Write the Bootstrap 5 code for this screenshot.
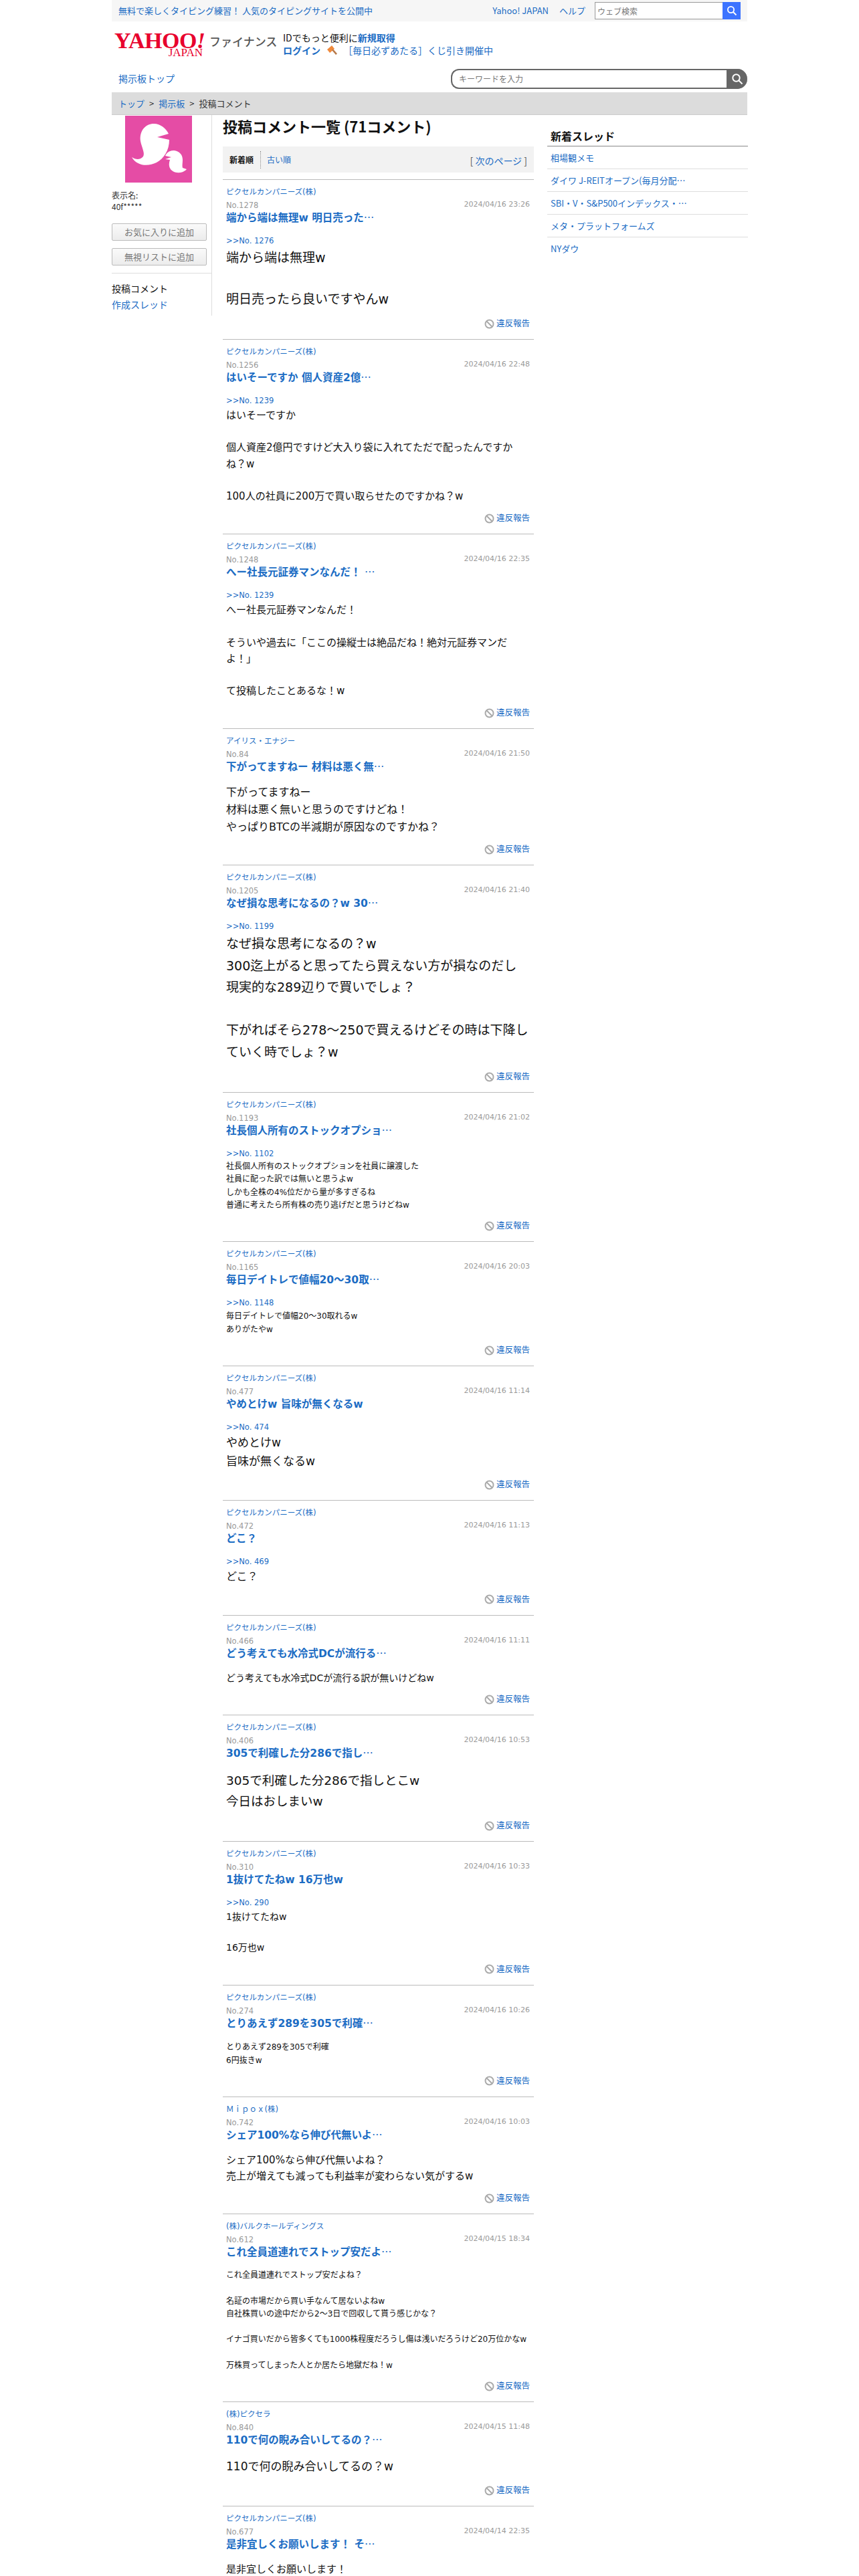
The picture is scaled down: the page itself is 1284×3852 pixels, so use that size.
<!DOCTYPE html>
<html lang="ja">
<head>
  <meta charset="UTF-8" />
  <meta name="viewport" content="width=device-width, initial-scale=1.0"/>
  <title>投稿コメント一覧 - Yahoo!ファイナンス</title>
  <link href="https://cdn.jsdelivr.net/npm/bootstrap@5.3.0/dist/css/bootstrap.min.css" rel="stylesheet"/>
  <style>
    html, body { height: 3852px; overflow: hidden; }
    body { font-family: "Noto Sans CJK JP", "Noto Sans", sans-serif; font-size: 13px; color: #111; background: #fff; }
    a { color: #1b6cc4; text-decoration: none; }
    .page-wrap { width: 950px; margin: 0 auto; }

    .top-strip { height: 32px; background: #f6f6f6; padding: 0 10px; }
    .strip-search { width: 218px; height: 26px; border: 1px solid #999; border-right: 0; background: #fff; margin-left: 14px; }
    .strip-search input { border: 0; outline: 0; width: 190px; height: 24px; padding: 0 3px; font-size: 12px; }
    .strip-search input::placeholder, .kw-search input::placeholder { color: #777; }
    .strip-search span { width: 27px; height: 26px; margin-top: -1px; background: #3c73ff; }

    .brand-row { height: 71px; padding: 16px 0 0 4px; }
    .yj-logo { width: 137px; font-family: "Liberation Serif", serif; color: #e8002d; }
    .yj-main { font-size: 34px; font-weight: 700; line-height: 25px; letter-spacing: -.5px; display: block; white-space: nowrap; }
    .yj-main i { font-style: italic; }
    .yj-sub { font-size: 17px; line-height: 12px; font-weight: 400; display: block; text-align: right; padding-right: 5px; }
    .fin-name { font-size: 17px; font-weight: 500; color: #555; margin: 3px 0 0 5px; line-height: 22px; width: 110px; }
    .id-lines { line-height: 19px; font-size: 14px; margin-top: -1px; }
    .kw-row { height: 35px; padding-left: 10px; }
    .kw-link { font-size: 14px; }
    .kw-search { width: 443px; height: 30px; border: 2px solid #666; border-right: 0; border-radius: 12px 15px 15px 12px; }
    .kw-search input { flex: 1; min-width: 0; border: 0; outline: 0; background: transparent; padding: 0 10px; font-size: 12px; }
    .kw-search span { width: 31px; height: 30px; margin-top: -2px; background: #666; border-radius: 0 15px 15px 0; }

    .crumb-bar { height: 34px; background: #dcdcdc; border-bottom: 1px solid #ccc; padding: 0 10px; }
    .crumb-bar .breadcrumb { --bs-breadcrumb-divider: ">"; --bs-breadcrumb-margin-bottom: 0; --bs-breadcrumb-item-padding-x: 7px; font-size: 13px; color: #333; }
    .crumb-bar .breadcrumb-item.active { color: #333; }
    .crumb-bar .breadcrumb-item + .breadcrumb-item::before { color: #333; }

    .left-rail { width: 150px; height: 300px; border-right: 1px solid #ddd; flex: none; }
    .face-box { width: 100px; height: 100px; margin: 1px 0 0 20px; display: block; }
    .rail-name { font-size: 12px; line-height: 17px; margin-top: 10px; color: #333; }
    .rail-btns { margin-top: 17px; gap: 11px; }
    .rail-btn { display: block; width: 142px; height: 26px; padding: 0; border: 1px solid #bbb; border-radius: 2px; background: linear-gradient(#fafafa, #ececec); color: #777; font-size: 13px; line-height: 24px; }
    .rail-menu { border-top: 1px solid #ddd; margin-top: 11px; padding-top: 10px; font-size: 14px; line-height: 24px; }

    .main-col { width: 465px; margin-left: 16px; flex: none; }
    .list-title { font-size: 22px; font-weight: 700; line-height: 30px; margin: 1px 0 16px; }
    .sort-bar { height: 39px; background: #f2f2f2; padding: 0 10px; margin-bottom: 10px; }
    .sort-now { font-size: 12px; font-weight: 700; padding-right: 10px; border-right: 1px dotted #888; line-height: 26px; }
    .sort-other { font-size: 12px; padding-left: 9px; }
    .next-page { font-size: 14px; color: #555; margin-top: 4px; }

    .post-item { border-top: 1px solid #bbb; padding: 11px 6px 14px 5px; font-family: "DejaVu Sans", "Noto Sans CJK JP", sans-serif; }
    .post-corp { display: block; font-size: 11.5px; line-height: 14px; }
    .post-meta { margin-top: 6px; line-height: 15px; color: #999; }
    .post-no { font-size: 11.5px; }
    .post-time { font-size: 11px; margin-top: -2px; }
    .post-head { display: block; height: 22px; font-size: 15.5px; font-weight: 700; line-height: 22px; }
    .post-dots { font-family: "Noto Sans CJK JP", sans-serif; font-weight: 400; line-height: 1; }
    .post-ref { display: block; font-size: 11.5px; line-height: 19px; margin-top: 14px; }
    .post-text { margin: 0; color: #111; }
    .post-text.no-ref { margin-top: 14px; }
    .txt-12 { font-size: 12px; line-height: 19.3px; }
    .txt-12b { font-size: 12px; line-height: 20px; }
    .txt-14 { font-size: 14px; line-height: 22.7px; }
    .txt-15 { font-size: 15px; line-height: 24.2px; }
    .txt-16 { font-size: 16px; line-height: 25.6px; }
    .txt-17 { font-size: 17px; line-height: 27.5px; }
    .txt-17b { font-size: 17px; line-height: 29px; }
    .txt-185 { font-size: 18.5px; line-height: 31px; }
    .txt-19 { font-size: 19px; line-height: 31px; }
    .txt-20 { font-size: 19px; line-height: 32.3px; margin-right: -6px; }
    .post-report { height: 18px; margin-top: 12px; font-size: 12.5px; line-height: 18px; gap: 3px; }

    .side-col { width: 300px; margin-left: 20px; flex: none; padding-top: 20px; }
    .side-title { font-size: 16px; font-weight: 700; line-height: 22px; padding: 0 0 4px 5px; border-bottom: 1px solid #888; margin: 0; }
    .side-col .list-group-item { height: 34px; padding: 0 5px; line-height: 33px; font-size: 13px; border-color: #ddd; color: #1b6cc4; }
  </style>
</head>
<body>
  <div class="page-wrap">
    <div class="top-strip d-flex align-items-center justify-content-between">
      <a href="#">無料で楽しくタイピング練習！ 人気のタイピングサイトを公開中</a>
      <div class="d-flex align-items-center">
        <a href="#" class="me-3">Yahoo! JAPAN</a>
        <a href="#">ヘルプ</a>
        <div class="strip-search d-flex">
          <input type="text" placeholder="ウェブ検索"/>
          <span class="d-flex align-items-center justify-content-center">
            <svg width="16" height="16" viewBox="0 0 16 16" fill="none" stroke="#fff" stroke-width="1.8"><circle cx="6.5" cy="6.5" r="4.6"/><path d="M10 10l4.5 4.5"/></svg>
          </span>
        </div>
      </div>
    </div>

    <div class="brand-row d-flex">
      <a href="#" class="yj-logo">
        <span class="yj-main">YAHOO<i>!</i></span>
        <span class="yj-sub">JAPAN</span>
      </a>
      <div class="fin-name">ファイナンス</div>
      <div class="id-lines">
        <div>IDでもっと便利に<a href="#" class="fw-bold">新規取得</a></div>
        <div class="d-flex align-items-center">
          <a href="#" class="fw-bold">ログイン</a>
          <svg class="mx-2" width="18" height="17" viewBox="0 0 18 17"><path d="M9 1L2 7l4 5 7-6z" fill="#f08a3c"/><path d="M9 8l6 7 2-1.8-6-6.8z" fill="#b97a4a"/></svg>
          <a href="#">［毎日必ずあたる］くじ引き開催中</a>
        </div>
      </div>
    </div>

    <div class="kw-row d-flex align-items-start justify-content-between">
      <a href="#" class="kw-link mt-1">掲示板トップ</a>
      <div class="kw-search d-flex">
        <input type="text" placeholder="キーワードを入力"/>
        <span class="d-flex align-items-center justify-content-center">
          <svg width="18" height="18" viewBox="0 0 18 18" fill="none" stroke="#fff" stroke-width="2"><circle cx="7.5" cy="7.5" r="5.2"/><path d="M11.5 11.5l5 5"/></svg>
        </span>
      </div>
    </div>

    <div class="crumb-bar d-flex align-items-center">
      <ol class="breadcrumb">
        <li class="breadcrumb-item"><a href="#">トップ</a></li>
        <li class="breadcrumb-item"><a href="#">掲示板</a></li>
        <li class="breadcrumb-item active">投稿コメント</li>
      </ol>
    </div>

    <div class="d-flex">
      <aside class="left-rail">
        <svg class="face-box" viewBox="0 0 100 100">
          <rect width="100" height="100" fill="#e54ca5"/>
          <path d="M10 62C16 66 23 66 27 61C30 56 25 48 23 38C21 22 31 12 43 12C53 12 61 19 65 27L48 32L66 36C66 52 58 64 47 70C35 76 18 76 10 62Z" fill="#fff"/>
          <path d="M60 60C62 55 66 52 73 52C81 53 86 58 86 66C86 71 85 75 86 78L92 80C87 86 76 87 70 82C65 78 65 72 67 66L60 65L69 62Z" fill="#fff"/>
        </svg>
        <div class="rail-name">表示名:<br>40f*****</div>
        <div class="rail-btns d-flex flex-column">
          <button type="button" class="rail-btn">お気に入りに追加</button>
          <button type="button" class="rail-btn">無視リストに追加</button>
        </div>
        <div class="rail-menu">
          <div>投稿コメント</div>
          <a href="#">作成スレッド</a>
        </div>
      </aside>

      <main class="main-col">
        <h1 class="list-title">投稿コメント一覧 (71コメント)</h1>
        <div class="sort-bar d-flex align-items-center justify-content-between">
          <div class="d-flex align-items-center">
            <span class="sort-now">新着順</span>
            <a href="#" class="sort-other">古い順</a>
          </div>
          <span class="next-page">[ <a href="#">次のページ</a> ]</span>
        </div>
        <div id="postList"></div>
      </main>

      <aside class="side-col">
        <h2 class="side-title">新着スレッド</h2>
        <div class="list-group list-group-flush">
          <a href="#" class="list-group-item">相場観メモ</a>
          <a href="#" class="list-group-item">ダイワ J-REITオープン(毎月分配…</a>
          <a href="#" class="list-group-item">SBI・V・S&amp;P500インデックス・…</a>
          <a href="#" class="list-group-item">メタ・プラットフォームズ</a>
          <a href="#" class="list-group-item">NYダウ</a>
        </div>
      </aside>
    </div>
  </div>

  <script>
    const PX = "ピクセルカンパニーズ(株)";
    const posts = [
      [PX, "1278", "2024/04/16 23:26", "端から端は無理w 明日売った…", "1276", "19", "端から端は無理w<br><br>明日売ったら良いですやんw"],
      [PX, "1256", "2024/04/16 22:48", "はいそーですか 個人資産2億…", "1239", "15", "はいそーですか<br><br>個人資産2億円ですけど大入り袋に入れてただで配ったんですかね？w<br><br>100人の社員に200万で買い取らせたのですかね？w"],
      [PX, "1248", "2024/04/16 22:35", "へー社長元証券マンなんだ！ …", "1239", "15", "へー社長元証券マンなんだ！<br><br>そういや過去に「ここの操縦士は絶品だね！絶対元証券マンだよ！」<br><br>て投稿したことあるな！w"],
      ["アイリス・エナジー", "84", "2024/04/16 21:50", "下がってますねー 材料は悪く無…", "", "16", "下がってますねー<br>材料は悪く無いと思うのですけどね！<br>やっぱりBTCの半減期が原因なのですかね？"],
      [PX, "1205", "2024/04/16 21:40", "なぜ損な思考になるの？w 30…", "1199", "20", "なぜ損な思考になるの？w<br>300迄上がると思ってたら買えない方が損なのだし<br>現実的な289辺りで買いでしょ？<br><br>下がればそら278〜250で買えるけどその時は下降していく時でしょ？w"],
      [PX, "1193", "2024/04/16 21:02", "社長個人所有のストックオプショ…", "1102", "12", "社長個人所有のストックオプションを社員に譲渡した<br>社員に配った訳では無いと思うよw<br>しかも全株の4%位だから量が多すぎるね<br>普通に考えたら所有株の売り逃げだと思うけどねw"],
      [PX, "1165", "2024/04/16 20:03", "毎日デイトレで値幅20〜30取…", "1148", "12b", "毎日デイトレで値幅20〜30取れるw<br>ありがたやw"],
      [PX, "477", "2024/04/16 11:14", "やめとけw 旨味が無くなるw", "474", "17", "やめとけw<br>旨味が無くなるw"],
      [PX, "472", "2024/04/16 11:13", "どこ？", "469", "16", "どこ？"],
      [PX, "466", "2024/04/16 11:11", "どう考えても水冷式DCが流行る…", "", "14", "どう考えても水冷式DCが流行る訳が無いけどねw"],
      [PX, "406", "2024/04/16 10:53", "305で利確した分286で指し…", "", "185", "305で利確した分286で指しとこw<br>今日はおしまいw"],
      [PX, "310", "2024/04/16 10:33", "1抜けてたねw 16万也w", "290", "14", "1抜けてたねw<br><br>16万也w"],
      [PX, "274", "2024/04/16 10:26", "とりあえず289を305で利確…", "", "12b", "とりあえず289を305で利確<br>6円抜きw"],
      ["Ｍｉｐｏｘ(株)", "742", "2024/04/16 10:03", "シェア100%なら伸び代無いよ…", "", "15", "シェア100%なら伸び代無いよね？<br>売上が増えても減っても利益率が変わらない気がするw"],
      ["(株)バルクホールディングス", "612", "2024/04/15 18:34", "これ全員道連れでストップ安だよ…", "", "12", "これ全員道連れでストップ安だよね？<br><br>名証の市場だから買い手なんて居ないよねw<br>自社株買いの途中だから2〜3日で回収して貰う感じかな？<br><br>イナゴ買いだから皆多くても1000株程度だろうし傷は浅いだろうけど20万位かなw<br><br>万株買ってしまった人とか居たら地獄だね！w"],
      ["(株)ピクセラ", "840", "2024/04/15 11:48", "110で何の睨み合いしてるの？…", "", "17b", "110で何の睨み合いしてるの？w"],
      [PX, "677", "2024/04/14 22:35", "是非宜しくお願いします！ そ…", "", "15", "是非宜しくお願いします！"]
    ];

    const banIcon = `<svg width="15" height="15" viewBox="0 0 15 15" class="align-self-center" fill="none" stroke="#aaa" stroke-width="2"><circle cx="7.5" cy="7.5" r="6"/><path d="M3.5 3.5l8 8"/></svg>`;

    const postList = document.getElementById("postList");
    postList.innerHTML = posts.map(([corp, no, time, head, ref, size, text]) => `
      <article class="post-item">
        <a href="#" class="post-corp">${corp}</a>
        <div class="post-meta d-flex justify-content-between">
          <span class="post-no">No.${no}</span>
          <span class="post-time">${time}</span>
        </div>
        <a href="#" class="post-head">${head.replace("…", '<span class="post-dots">…</span>')}</a>
        ${ref ? `<a href="#" class="post-ref">&gt;&gt;No. ${ref}</a>` : ""}
        <p class="post-text txt-${size} ${ref ? "" : "no-ref"}">${text}</p>
        <div class="post-report d-flex justify-content-end">${banIcon}<a href="#">違反報告</a></div>
      </article>`).join("");
  </script>
  <script src="https://cdn.jsdelivr.net/npm/bootstrap@5.3.0/dist/js/bootstrap.bundle.min.js"></script>
</body>
</html>
